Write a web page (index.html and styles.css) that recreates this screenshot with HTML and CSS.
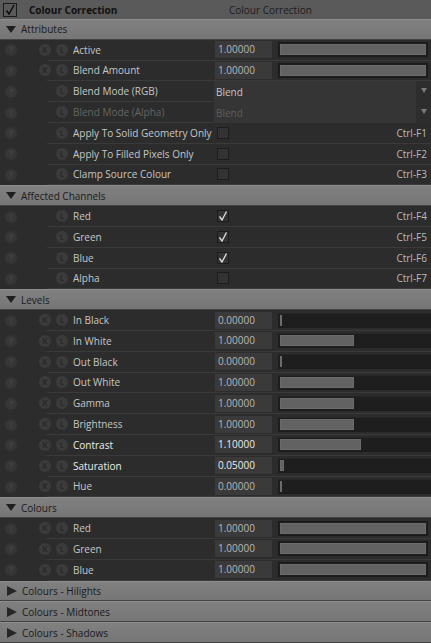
FILE: index.html
```html
<!DOCTYPE html>
<html>
<head>
<meta charset="utf-8">
<link rel="stylesheet" href="styles.css">
</head>
<body>
<div class="panel">
  <div class="topbar">
    <span class="topcb"><svg width="12" height="12" viewBox="0 0 12 12"><path d="M2.5 6.5 L5 10 L10 1" fill="none" stroke="#0a0a0a" stroke-width="1.4"/></svg></span>
    <span class="title">Colour Correction</span>
    <span class="title2">Colour Correction</span>
  </div>

  <div class="head"><span class="tri-down"></span>Attributes</div>
  <div class="row"><div class="qcol"><span class="ic">?</span></div><div class="main"><span class="ic k">K</span><span class="ic l">L</span><span class="label">Active</span><div class="ctrl"><span class="val">1.00000</span><span class="slider"><span class="fill full"></span></span></div></div></div>
  <div class="row"><div class="qcol"><span class="ic">?</span></div><div class="main"><span class="ic k">K</span><span class="ic l">L</span><span class="label">Blend Amount</span><div class="ctrl"><span class="val">1.00000</span><span class="slider"><span class="fill full"></span></span></div></div></div>
  <div class="row"><div class="qcol"><span class="ic">?</span></div><div class="main"><span class="ic k none"></span><span class="ic l">L</span><span class="label">Blend Mode (RGB)</span><div class="ctrl drop"><span class="dtext">Blend</span><span class="darrow"></span></div></div></div>
  <div class="row"><div class="qcol"><span class="ic">?</span></div><div class="main"><span class="ic k none"></span><span class="ic l">L</span><span class="label dis">Blend Mode (Alpha)</span><div class="ctrl drop"><span class="dtext dis2">Blend</span><span class="darrow"></span></div></div></div>
  <div class="row"><div class="qcol"><span class="ic">?</span></div><div class="main"><span class="ic k none"></span><span class="ic l">L</span><span class="label">Apply To Solid Geometry Only</span><div class="ctrl chk"><span class="cb"></span><span class="key">Ctrl-F1</span></div></div></div>
  <div class="row"><div class="qcol"><span class="ic">?</span></div><div class="main"><span class="ic k none"></span><span class="ic l">L</span><span class="label">Apply To Filled Pixels Only</span><div class="ctrl chk"><span class="cb"></span><span class="key">Ctrl-F2</span></div></div></div>
  <div class="row"><div class="qcol"><span class="ic">?</span></div><div class="main"><span class="ic k none"></span><span class="ic l">L</span><span class="label">Clamp Source Colour</span><div class="ctrl chk"><span class="cb"></span><span class="key">Ctrl-F3</span></div></div></div>

  <div class="head"><span class="tri-down"></span>Affected Channels</div>
  <div class="row"><div class="qcol"><span class="ic">?</span></div><div class="main"><span class="ic k none"></span><span class="ic l">L</span><span class="label">Red</span><div class="ctrl chk"><span class="cb"><svg width="10" height="10" viewBox="0 0 10 10"><path d="M1.5 5.5 L4 9 L8.5 0.5" fill="none" stroke="#e0e0e0" stroke-width="1.3"/></svg></span><span class="key">Ctrl-F4</span></div></div></div>
  <div class="row"><div class="qcol"><span class="ic">?</span></div><div class="main"><span class="ic k none"></span><span class="ic l">L</span><span class="label">Green</span><div class="ctrl chk"><span class="cb"><svg width="10" height="10" viewBox="0 0 10 10"><path d="M1.5 5.5 L4 9 L8.5 0.5" fill="none" stroke="#e0e0e0" stroke-width="1.3"/></svg></span><span class="key">Ctrl-F5</span></div></div></div>
  <div class="row"><div class="qcol"><span class="ic">?</span></div><div class="main"><span class="ic k none"></span><span class="ic l">L</span><span class="label">Blue</span><div class="ctrl chk"><span class="cb"><svg width="10" height="10" viewBox="0 0 10 10"><path d="M1.5 5.5 L4 9 L8.5 0.5" fill="none" stroke="#e0e0e0" stroke-width="1.3"/></svg></span><span class="key">Ctrl-F6</span></div></div></div>
  <div class="row"><div class="qcol"><span class="ic">?</span></div><div class="main"><span class="ic k none"></span><span class="ic l">L</span><span class="label">Alpha</span><div class="ctrl chk"><span class="cb"></span><span class="key">Ctrl-F7</span></div></div></div>

  <div class="head"><span class="tri-down"></span>Levels</div>
  <div class="row"><div class="qcol"><span class="ic">?</span></div><div class="main"><span class="ic k">K</span><span class="ic l">L</span><span class="label">In Black</span><div class="ctrl"><span class="val">0.00000</span><span class="slider open"><span class="fill" style="width:0px"></span></span></div></div></div>
  <div class="row"><div class="qcol"><span class="ic">?</span></div><div class="main"><span class="ic k">K</span><span class="ic l">L</span><span class="label">In White</span><div class="ctrl"><span class="val">1.00000</span><span class="slider open"><span class="fill" style="width:74px"></span></span></div></div></div>
  <div class="row"><div class="qcol"><span class="ic">?</span></div><div class="main"><span class="ic k">K</span><span class="ic l">L</span><span class="label">Out Black</span><div class="ctrl"><span class="val">0.00000</span><span class="slider open"><span class="fill" style="width:0px"></span></span></div></div></div>
  <div class="row"><div class="qcol"><span class="ic">?</span></div><div class="main"><span class="ic k">K</span><span class="ic l">L</span><span class="label">Out White</span><div class="ctrl"><span class="val">1.00000</span><span class="slider open"><span class="fill" style="width:74px"></span></span></div></div></div>
  <div class="row"><div class="qcol"><span class="ic">?</span></div><div class="main"><span class="ic k">K</span><span class="ic l">L</span><span class="label">Gamma</span><div class="ctrl"><span class="val">1.00000</span><span class="slider open"><span class="fill" style="width:74px"></span></span></div></div></div>
  <div class="row"><div class="qcol"><span class="ic">?</span></div><div class="main"><span class="ic k">K</span><span class="ic l">L</span><span class="label">Brightness</span><div class="ctrl"><span class="val">1.00000</span><span class="slider open"><span class="fill" style="width:74px"></span></span></div></div></div>
  <div class="row"><div class="qcol"><span class="ic">?</span></div><div class="main"><span class="ic k">K</span><span class="ic l">L</span><span class="label hi">Contrast</span><div class="ctrl"><span class="val hi">1.10000</span><span class="slider open"><span class="fill" style="width:81px"></span></span></div></div></div>
  <div class="row"><div class="qcol"><span class="ic">?</span></div><div class="main"><span class="ic k">K</span><span class="ic l">L</span><span class="label hi">Saturation</span><div class="ctrl"><span class="val hi">0.05000</span><span class="slider open"><span class="fill" style="width:4px"></span></span></div></div></div>
  <div class="row"><div class="qcol"><span class="ic">?</span></div><div class="main"><span class="ic k">K</span><span class="ic l">L</span><span class="label">Hue</span><div class="ctrl"><span class="val">0.00000</span><span class="slider open"><span class="fill" style="width:0px"></span></span></div></div></div>

  <div class="head"><span class="tri-down"></span>Colours</div>
  <div class="row"><div class="qcol"><span class="ic">?</span></div><div class="main"><span class="ic k">K</span><span class="ic l">L</span><span class="label">Red</span><div class="ctrl"><span class="val">1.00000</span><span class="slider"><span class="fill full"></span></span></div></div></div>
  <div class="row"><div class="qcol"><span class="ic">?</span></div><div class="main"><span class="ic k">K</span><span class="ic l">L</span><span class="label">Green</span><div class="ctrl"><span class="val">1.00000</span><span class="slider"><span class="fill full"></span></span></div></div></div>
  <div class="row"><div class="qcol"><span class="ic">?</span></div><div class="main"><span class="ic k">K</span><span class="ic l">L</span><span class="label">Blue</span><div class="ctrl"><span class="val">1.00000</span><span class="slider"><span class="fill full"></span></span></div></div></div>

  <div class="head"><span class="tri-right"></span>Colours - Hilights</div>
  <div class="head"><span class="tri-right"></span>Colours - Midtones</div>
  <div class="head"><span class="tri-right"></span>Colours - Shadows</div>
</div>
</body>
</html>
```
FILE: styles.css
```css
html, body {
  margin: 0;
  padding: 0;
  background: #2c2c2c;
}
.panel {
  width: 431px;
  height: 643px;
  overflow: hidden;
  font-family: "Open Sans", "DejaVu Sans", sans-serif;
  font-size: 10px;
  background: #2c2c2c;
}
.topbar {
  height: 19px;
  box-sizing: border-box;
  background: #5a5a5a;
  display: flex;
  align-items: center;
}
.topcb {
  width: 14px;
  height: 14px;
  box-sizing: border-box;
  border: 1px solid #1a1a1a;
  margin-left: 3px;
  display: flex;
  align-items: center;
  justify-content: center;
}
.title {
  margin-left: 12px;
  font-weight: 700;
  color: #101010;
  width: 200px;
}
.title2 {
  color: #1c1c1c;
}
.head {
  height: 20.8px;
  box-sizing: border-box;
  background: linear-gradient(#808080, #767676);
  border-top: 1px solid #8c8c8c;
  border-bottom: 1px solid #444;
  display: flex;
  align-items: center;
  color: #1a1a1a;
}
.tri-down {
  width: 0;
  height: 0;
  border-left: 5.5px solid transparent;
  border-right: 5.5px solid transparent;
  border-top: 7px solid #1e1e1e;
  margin-left: 6px;
  margin-right: 5px;
}
.tri-right {
  width: 0;
  height: 0;
  border-top: 5.5px solid transparent;
  border-bottom: 5.5px solid transparent;
  border-left: 10px solid #262626;
  margin-left: 7px;
  margin-right: 5px;
}
.row {
  height: 20.8px;
  display: flex;
  background: #2c2c2c;
}
.qcol {
  width: 47px;
  flex: none;
  display: flex;
  align-items: center;
}
.qcol .ic {
  margin-left: 5px;
  color: #474747;
  background: #363636;
}
.main {
  flex: 1;
  display: flex;
  align-items: center;
  box-sizing: border-box;
  border-bottom: 1px solid #3a3a3a;
  min-width: 0;
}
.ic {
  width: 12px;
  height: 12px;
  border-radius: 50%;
  background: #3b3b3b;
  color: #2a2a2a;
  font-size: 8px;
  font-weight: 700;
  display: flex;
  align-items: center;
  justify-content: center;
  flex: none;
  line-height: 1;
}
.ic.k { margin-left: -8px; }
.ic.l { margin-left: 5px; }
.ic.none { visibility: hidden; }
.label {
  margin-left: 5px;
  width: 141px;
  flex: none;
  white-space: nowrap;
  overflow: hidden;
  color: #c6c6c6;
}
.label.dis { color: #646464; }
.label.hi, .val.hi { color: #ececec; }
.ctrl {
  flex: 1;
  display: flex;
  align-items: center;
  align-self: stretch;
  min-width: 0;
}
.val {
  width: 57px;
  height: 17px;
  box-sizing: border-box;
  margin-left: 1px;
  background: #3a3a3a;
  color: #b8b8b8;
  padding-left: 3px;
  line-height: 17px;
  flex: none;
}
.slider {
  margin-left: 6px;
  width: 150px;
  height: 15px;
  box-sizing: border-box;
  background: #1e1e1e;
  border: 1px solid #1a1a1a;
  padding: 1px;
  display: flex;
  flex: none;
}
.slider.open {
  width: 160px;
  border-color: #1c1c1c;
  border-top-color: #262626;
}
.fill {
  display: block;
  height: 100%;
  box-sizing: border-box;
  background: #626262;
  border: 1px solid #6b6b6b;
  min-width: 2px;
}
.fill.full { width: 100%; }
.drop {
  background: #353535;
  margin-bottom: -1px;
}
.dtext {
  flex: 1;
  padding-left: 2px;
  color: #c6c6c6;
}
.dtext.dis2 { color: #5e5e5e; }
.darrow {
  width: 15px;
  align-self: stretch;
  background: #2d2d2d;
  position: relative;
}
.darrow::after {
  content: "";
  position: absolute;
  left: 5px;
  top: 7px;
  border-left: 3.5px solid transparent;
  border-right: 3.5px solid transparent;
  border-top: 5px solid #7a7a7a;
}
.chk {
  justify-content: space-between;
}
.cb {
  width: 12px;
  height: 12px;
  box-sizing: border-box;
  margin-left: 3px;
  background: #333;
  border: 1px solid #1b1b1b;
  display: flex;
  align-items: center;
  justify-content: center;
}
.key {
  color: #bababa;
  margin-right: 4px;
}
```
